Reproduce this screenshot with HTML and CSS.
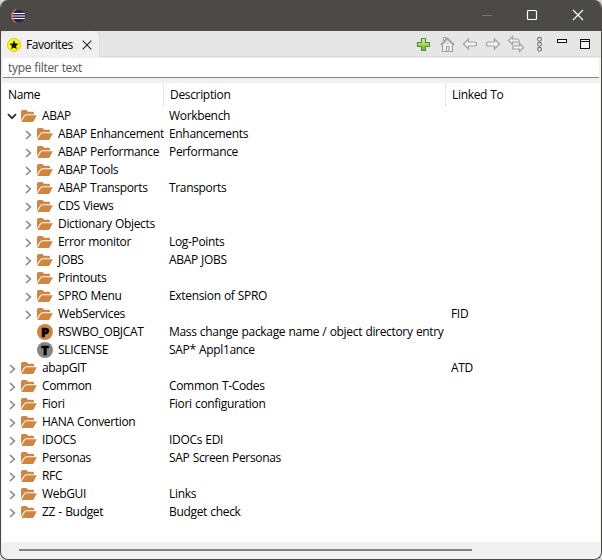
FILE: index.html
```
<!DOCTYPE html>
<html lang="en">
<head>
<meta charset="utf-8">
<title>Favorites</title>
<link rel="stylesheet" href="styles.css">
</head>
<body>
<svg width="0" height="0" class="defs">
  <symbol id="folder" viewBox="0 0 16 14">
    <path fill="#d08540" d="M0 11.500V2.500Q0 1 1.500 1H5.500L7 2.800H12Q13 2.800 13 4V5.200H5.500Q3.800 5.300 2.900 6.800Z"/>
    <path fill="#d08540" d="M0.300 13 3.800 7.200Q4.200 6.300 5.300 6.300H15.800L12.700 12.200Q12.300 13 11.300 13Z"/>
  </symbol>
  <symbol id="right" viewBox="0 0 7 10"><path d="M1 1 5.300 5 1 9" fill="none" stroke="#8b8b8b" stroke-width="1.700"/></symbol>
  <symbol id="down" viewBox="0 0 10 7"><path d="M1 1.200 5 5.200 9 1.200" fill="none" stroke="#303030" stroke-width="1.800"/></symbol>
</svg>
<div class="window">
  <header class="titlebar">
    <svg class="logo" width="16" height="14" viewBox="0 0 16 14"><path d="M6 .5A7 7 0 0 0 6 13.500 9 9 0 0 1 6 .5" fill="#f39322" stroke="#f39322" stroke-width=".6"/><circle cx="8.600" cy="7" r="6.300" fill="#2d2255"/><path d="M2.500 4.500H14.700M2.200 7H15M2.500 9.500H14.700" stroke="#fff" stroke-width="1.200"/></svg>
    <svg class="controls" width="104" height="12" viewBox="0 0 104 12"><path d="M1 6.500H11" stroke="#777674"/><rect x="46.500" y="1.500" width="9" height="9" rx="1" fill="none" stroke="#fff" stroke-width="1.200"/><path d="M92 1 102 11M102 1 92 11" stroke="#fff" stroke-width="1.100"/></svg>
  </header>
  <div class="tabs">
    <div class="tab">
      <svg width="14" height="14" viewBox="0 0 14 14"><circle cx="7" cy="7" r="6.500" fill="#ffff00" stroke="#c4b62c" stroke-width=".8"/><path d="M7 2.300 8.300 5.500 11.600 5.700 9 7.900 9.900 11.200 7 9.400 4.100 11.200 5 7.900 2.400 5.700 5.700 5.500Z" fill="#111"/></svg>
      <span class="tab-name">Favorites</span>
      <svg class="tab-close" width="10" height="10" viewBox="0 0 10 10"><path d="M.7.700 9.300 9.300M9.300.700.700 9.300" stroke="#222" stroke-width="1.050"/></svg>
    </div>
    <svg class="tools" width="176" height="18" viewBox="416 35 176 18">
      <defs><linearGradient id="g" x2="0" y2="1"><stop stop-color="#e8f29a"/><stop offset="1" stop-color="#75ae20"/></linearGradient></defs>
      <path d="M421.500 38.500H425.500V42.500H429.500V46.500H425.500V50.500H421.500V46.500H417.500V42.500H421.500Z" fill="url(#g)" stroke="#51904a" stroke-width="1.200"/>
      <g fill="#f2f2f2" stroke="#a2a2a2" stroke-width="1.200">
        <path d="M442.500 44V51.500H452.500V44"/><path d="M441 45 447.500 38.500 454 45" fill="none" stroke-width="1.800"/><path d="M443.500 41V37.500H445.500V39" /><path d="M446.500 51V46.500H449V51M447 43.500H448.500" />
        <path d="M463.500 44 468.500 39V42H474.500Q476.500 42 476.500 44T474.500 46H468.500V49Z"/>
        <path d="M499.500 44 494.500 39V42H488.500Q486.500 42 486.500 44T488.500 46H494.500V49Z"/>
        <path d="M508.500 40.500 512.500 36.500V39H517.500Q519.500 39.500 519.500 42H512.500V44.500Z"/><path d="M523.500 47.500 519.500 43.500V46H514.500Q512.500 46 512.500 49H519.500V51.500Z"/>
      </g>
      <g fill="#f5f5f5" stroke="#6e6e6e" stroke-width="1.100"><circle cx="539.500" cy="39.300" r="1.900"/><circle cx="539.500" cy="44.300" r="1.900"/><circle cx="539.500" cy="49.300" r="1.900"/></g>
      <g fill="#fff" stroke="#111"><rect x="557.500" y="39.500" width="9" height="3"/><rect x="580.500" y="39.500" width="9" height="9" fill="#f4f4f4"/><path d="M580 41.500H590"/></g>
    </svg>
  </div>
  <div class="filter">type filter text</div>
  <div class="tree">
    <div class="head"><span>Name</span><span>Description</span><span>Linked To</span></div>
    <div class="row"><span class="name"><svg class="twist open"><use href="#down"/></svg><svg class="icon"><use href="#folder"/></svg>ABAP</span><span>Workbench</span><span></span></div>
    <div class="row child"><span class="name"><svg class="twist"><use href="#right"/></svg><svg class="icon"><use href="#folder"/></svg>ABAP Enhancement</span><span>Enhancements</span><span></span></div>
    <div class="row child"><span class="name"><svg class="twist"><use href="#right"/></svg><svg class="icon"><use href="#folder"/></svg>ABAP Performance</span><span>Performance</span><span></span></div>
    <div class="row child"><span class="name"><svg class="twist"><use href="#right"/></svg><svg class="icon"><use href="#folder"/></svg>ABAP Tools</span><span></span><span></span></div>
    <div class="row child"><span class="name"><svg class="twist"><use href="#right"/></svg><svg class="icon"><use href="#folder"/></svg>ABAP Transports</span><span>Transports</span><span></span></div>
    <div class="row child"><span class="name"><svg class="twist"><use href="#right"/></svg><svg class="icon"><use href="#folder"/></svg>CDS Views</span><span></span><span></span></div>
    <div class="row child"><span class="name"><svg class="twist"><use href="#right"/></svg><svg class="icon"><use href="#folder"/></svg>Dictionary Objects</span><span></span><span></span></div>
    <div class="row child"><span class="name"><svg class="twist"><use href="#right"/></svg><svg class="icon"><use href="#folder"/></svg>Error monitor</span><span>Log-Points</span><span></span></div>
    <div class="row child"><span class="name"><svg class="twist"><use href="#right"/></svg><svg class="icon"><use href="#folder"/></svg>JOBS</span><span>ABAP JOBS</span><span></span></div>
    <div class="row child"><span class="name"><svg class="twist"><use href="#right"/></svg><svg class="icon"><use href="#folder"/></svg>Printouts</span><span></span><span></span></div>
    <div class="row child"><span class="name"><svg class="twist"><use href="#right"/></svg><svg class="icon"><use href="#folder"/></svg>SPRO Menu</span><span>Extension of SPRO</span><span></span></div>
    <div class="row child"><span class="name"><svg class="twist"><use href="#right"/></svg><svg class="icon"><use href="#folder"/></svg>WebServices</span><span></span><span>FID</span></div>
    <div class="row child"><span class="name"><i class="badge program">P</i>RSWBO_OBJCAT</span><span>Mass change package name / object directory entry</span><span></span></div>
    <div class="row child"><span class="name"><i class="badge transaction">T</i>SLICENSE</span><span>SAP* Appl1ance</span><span></span></div>
    <div class="row"><span class="name"><svg class="twist"><use href="#right"/></svg><svg class="icon"><use href="#folder"/></svg>abapGIT</span><span></span><span>ATD</span></div>
    <div class="row"><span class="name"><svg class="twist"><use href="#right"/></svg><svg class="icon"><use href="#folder"/></svg>Common</span><span>Common T-Codes</span><span></span></div>
    <div class="row"><span class="name"><svg class="twist"><use href="#right"/></svg><svg class="icon"><use href="#folder"/></svg>Fiori</span><span>Fiori configuration</span><span></span></div>
    <div class="row"><span class="name"><svg class="twist"><use href="#right"/></svg><svg class="icon"><use href="#folder"/></svg>HANA Convertion</span><span></span><span></span></div>
    <div class="row"><span class="name"><svg class="twist"><use href="#right"/></svg><svg class="icon"><use href="#folder"/></svg>IDOCS</span><span>IDOCs EDI</span><span></span></div>
    <div class="row"><span class="name"><svg class="twist"><use href="#right"/></svg><svg class="icon"><use href="#folder"/></svg>Personas</span><span>SAP Screen Personas</span><span></span></div>
    <div class="row"><span class="name"><svg class="twist"><use href="#right"/></svg><svg class="icon"><use href="#folder"/></svg>RFC</span><span></span><span></span></div>
    <div class="row"><span class="name"><svg class="twist"><use href="#right"/></svg><svg class="icon"><use href="#folder"/></svg>WebGUI</span><span>Links</span><span></span></div>
    <div class="row"><span class="name"><svg class="twist"><use href="#right"/></svg><svg class="icon"><use href="#folder"/></svg>ZZ - Budget</span><span>Budget check</span><span></span></div>
  </div>
  <div class="scrollbar"><div class="thumb"></div></div>
</div>
</body>
</html>
```
FILE: styles.css
```
* { box-sizing: border-box; }
body { margin: 0; background: #d8d8d8; overflow: hidden; font: 12px/18px "Open Sans", sans-serif; letter-spacing: -0.33px; word-spacing: 0.5px; color: #000; }
svg { display: block; flex: none; }
.defs { position: absolute; }
.window { width: 602px; height: 560px; display: flex; flex-direction: column; border: 1px solid #4b4a47; border-top: 0; border-radius: 8px; overflow: hidden; background: #f0f0f0; }
.titlebar { height: 31px; flex: none; background: #4b4a47; display: flex; align-items: center; justify-content: space-between; padding: 0 16px 0 9px; }
.controls { margin-top: -1px; }
.tabs { height: 26px; flex: none; background: #e6e6e6; border-bottom: 1px solid #d9d9d9; display: flex; justify-content: space-between; padding-right: 9px; }
.tab { width: 99px; height: 26px; padding: 1px 0 0 6px; display: flex; align-items: center; background: #f0f0f0; border-right: 1px solid #d9d9d9; border-radius: 6px 6px 0 0; }
.tab-name { margin-left: 5px; width: 55px; white-space: nowrap; letter-spacing: -0.45px; }
.tab-close { margin-left: 1px; }
.tools { margin-top: 4px; }
.filter { height: 21px; flex: none; margin: 0 2px; padding: 1px 0 0 5px; line-height: 17px; background: #fff; border-top: 1px solid #f0f0f0; border-bottom: 1px solid #858585; color: #555; }
.tree { height: 459px; flex: none; margin: 5px 1px 0; background: #fff; }
.head, .row { display: grid; grid-template-columns: 161px 282px 1fr; white-space: nowrap; }
.head { height: 24px; line-height: 24px; }
.head span { padding-left: 7px; border-right: 1px solid #e5e5e5; }
.head span:first-child { padding-left: 6px; }
.head span:last-child { border: 0; }
.head, .row { grid-template-columns: 162px 282px 1fr; }
.head span { padding-left: 6px; }
.row { height: 18px; }
.row > span { padding-left: 5px; }
.row > .name { display: flex; align-items: center; padding-left: 7px; overflow: hidden; }
.child > .name { padding-left: 23px; }
.twist { width: 7px; height: 10px; margin: 1px 5px 0 0; }
.twist.open { width: 10px; height: 7px; margin: 1px 4px 0 -2px; }
.icon { width: 16px; height: 14px; margin-right: 5px; }
.badge { width: 16px; height: 16px; margin: 0 5px 0 12px; border-radius: 50%; font: 900 13px/16px "Open Sans", sans-serif; -webkit-text-stroke: 0.5px #000; letter-spacing: 0; text-align: center; }
.program { background: #d08540; }
.transaction { background: #858585; }
.scrollbar { height: 17px; padding: 7px 0 0 18px; }
.thumb { width: 453px; height: 2px; background: #858585; }
```
